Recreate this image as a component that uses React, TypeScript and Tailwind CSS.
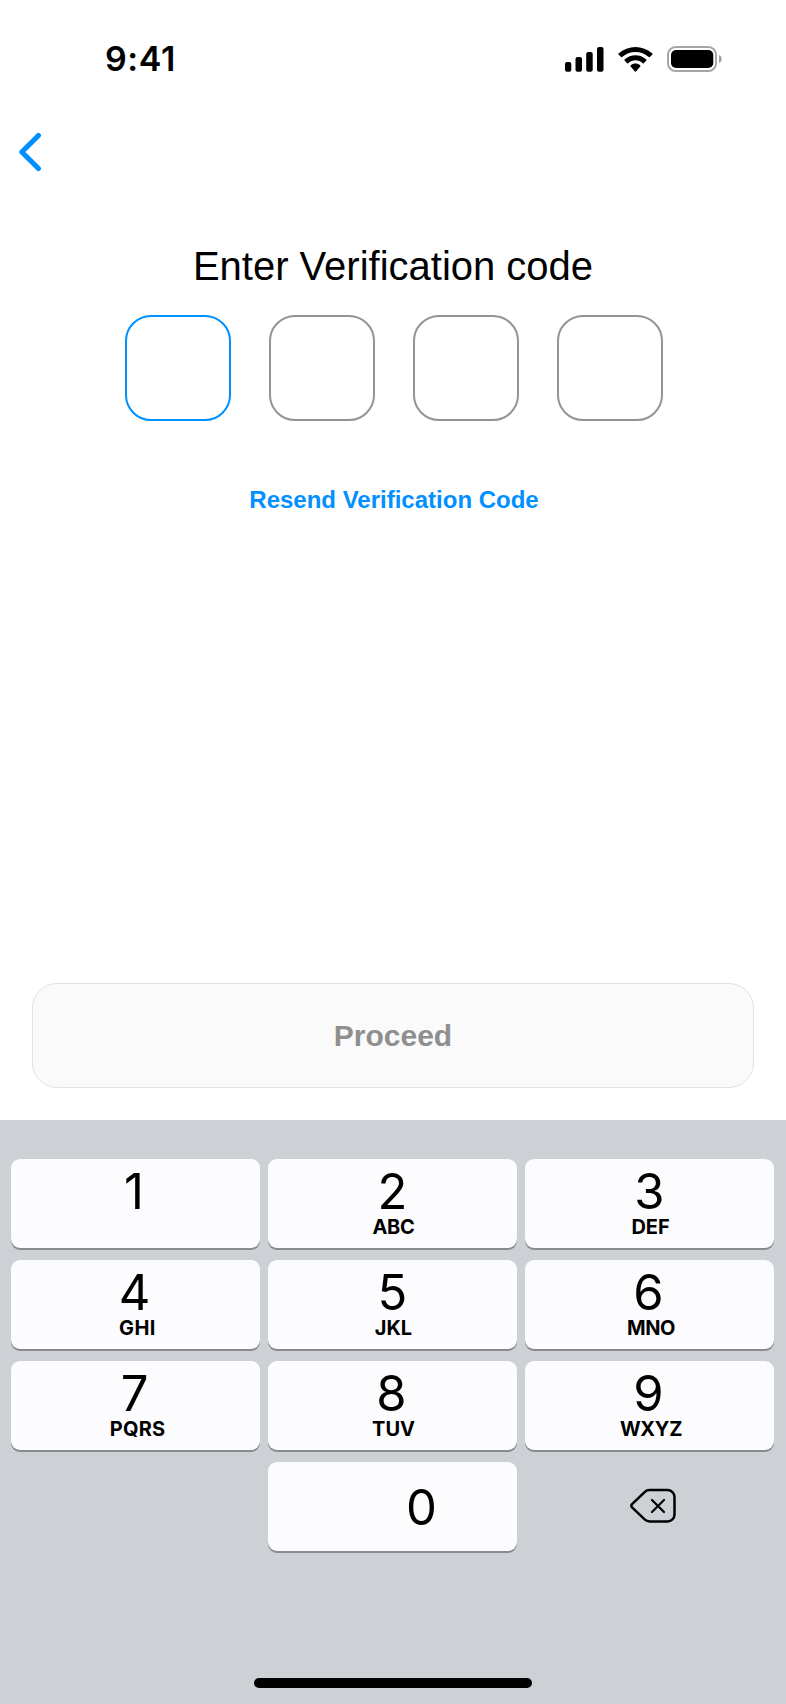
import React from "react";

type Key = { digit: string; letters: string; digitClass: string; lettersClass: string };

const keys: Key[] = [
  { digit: "1", letters: "", digitClass: "pr-[3px]", lettersClass: "" },
  { digit: "2", letters: "ABC", digitClass: "", lettersClass: "pl-[2px] tracking-[-0.3px]" },
  { digit: "3", letters: "DEF", digitClass: "", lettersClass: "pl-[2px] tracking-[-0.1px]" },
  { digit: "4", letters: "GHI", digitClass: "pr-[2px]", lettersClass: "pl-[4px] tracking-[0.4px]" },
  { digit: "5", letters: "JKL", digitClass: "", lettersClass: "pl-[2px]" },
  { digit: "6", letters: "MNO", digitClass: "pr-[2px]", lettersClass: "pl-[3px] tracking-[-0.4px]" },
  { digit: "7", letters: "PQRS", digitClass: "pr-[2px]", lettersClass: "pl-[4px] tracking-[0.2px]" },
  { digit: "8", letters: "TUV", digitClass: "pr-[2px]", lettersClass: "pl-[2px]" },
  { digit: "9", letters: "WXYZ", digitClass: "pr-[2px]", lettersClass: "pl-[3px] tracking-[-0.3px]" },
];

const keyBase =
  "h-[89px] rounded-[9px] bg-[#fcfcfe] text-black shadow-[0_2px_0_0_#898a8d] flex flex-col items-center";

function StatusBar() {
  return (
    <header className="flex h-[118px] items-start justify-between pl-[105px] pr-[64px] pt-[38px]">
      <div className="font-['Inter',sans-serif] text-[34px] font-semibold leading-[42px] tracking-[0.6px]">9:41</div>
      <svg width="158" height="42" viewBox="0 0 158 42" className="block">
        <g>
          <rect x="1" y="24" width="6.3" height="9.7" rx="2" />
          <rect x="11.5" y="19" width="6.5" height="14.7" rx="2" />
          <rect x="22.2" y="14" width="6.5" height="19.7" rx="2" />
          <rect x="33" y="9" width="6.5" height="24.7" rx="2" />
        </g>
        <path
          transform="translate(54.3 9) scale(2)"
          d="M8.5713 2.46628C11.0584 2.46639 13.4504 3.38847 15.2529 5.04195C15.3887 5.1696 15.6056 5.16799 15.7393 5.03834L17.0368 3.77487C17.1045 3.70911 17.1422 3.62004 17.1417 3.52735C17.1411 3.43467 17.1023 3.34603 17.0338 3.28104C12.3028 -1.09368 4.83907 -1.09368 0.108056 3.28104C0.0395 3.34598 0.0006 3.4346 0 3.52728C-0.0006 3.61996 0.037 3.70906 0.104689 3.77487L1.40255 5.03834C1.53615 5.16819 1.75327 5.1698 1.88893 5.04195C3.69167 3.38836 6.08395 2.46628 8.5713 2.46628ZM8.56795 6.68656C9.92527 6.68647 11.2341 7.19821 12.2403 8.12234C12.3763 8.25347 12.5907 8.25063 12.7234 8.11594L14.0106 6.79582C14.0784 6.72652 14.116 6.63251 14.115 6.5348C14.114 6.4371 14.0746 6.34384 14.0054 6.276C10.9416 3.3851 6.19688 3.3851 3.13305 6.276C3.06384 6.34384 3.02435 6.43715 3.02345 6.53487C3.02254 6.6326 3.0603 6.72658 3.12822 6.79582L4.41513 8.11594C4.54778 8.25063 4.76215 8.25347 4.89823 8.12234C5.90368 7.19882 7.21152 6.68713 8.56795 6.68656ZM11.0924 9.48011C11.0943 9.58546 11.0572 9.68703 10.9899 9.76084L8.81327 12.2156C8.74946 12.2877 8.66247 12.3283 8.5717 12.3283C8.48093 12.3283 8.39394 12.2877 8.33013 12.2156L6.15314 9.76084C6.08585 9.68697 6.04886 9.58537 6.05088 9.48002C6.0529 9.37468 6.09378 9.2749 6.16388 9.2043C7.55379 7.92057 9.58961 7.92057 10.9795 9.2043C11.0496 9.27496 11.0904 9.37477 11.0924 9.48011Z"
        />
        <rect x="104" y="9" width="48" height="24" rx="7.6" fill="none" stroke="#a6a6a6" strokeWidth="2" />
        <rect x="107" y="12" width="42.3" height="18" rx="5" />
        <path d="M155 17v8c1.7-.7 2.7-2.2 2.7-4s-1-3.3-2.7-4z" fill="#a0a0a0" />
      </svg>
    </header>
  );
}

export default function App() {
  return (
    <div className="flex h-[1704px] w-[786px] flex-col overflow-hidden bg-white font-['Liberation_Sans',Arial,sans-serif] text-black">
      <StatusBar />
      <nav className="h-[68px] pl-[14px] pt-[10px]">
        <button aria-label="Back" className="block">
          <svg width="32" height="48" viewBox="0 0 32 48" fill="none" stroke="#0090ff" strokeWidth="5.2" strokeLinecap="round" strokeLinejoin="round">
            <path d="M24.5 7.5L7.8 24l16.7 16.5" />
          </svg>
        </button>
      </nav>
      <main className="flex flex-1 flex-col items-center pt-[57px]">
        <h1 className="text-[40px] leading-[46px]">Enter Verification code</h1>
        <div className="ml-[2px] mt-[26px] flex gap-[38px]">
          <div className="size-[106px] rounded-[26px] border-2 border-[#0090ff]" />
          <div className="size-[106px] rounded-[26px] border-2 border-[#949494]" />
          <div className="size-[106px] rounded-[26px] border-2 border-[#949494]" />
          <div className="size-[106px] rounded-[26px] border-2 border-[#949494]" />
        </div>
        <button className="ml-[2px] mt-[65px] text-[24px] font-bold leading-[28px] text-[#0090ff]">Resend Verification Code</button>
        <button className="mb-[32px] mt-auto h-[105px] w-[722px] rounded-[25px] border border-[#e2e2e2] bg-[#fafafa] text-[30px] font-bold text-[#8f8f8f]">
          Proceed
        </button>
      </main>
      <section className="flex h-[584px] flex-col items-center bg-[#cdd0d4] pt-[39px] font-['Inter',sans-serif]">
        <div className="mr-[1px] grid grid-cols-[249px_249px_249px] gap-x-[8px] gap-y-[12px]">
          {keys.map((key) => (
            <button key={key.digit} className={keyBase}>
              <span className={`mt-[11px] text-[49px] leading-[44px] ${key.digitClass}`}>{key.digit}</span>
              {key.letters && (
                <span className={`mt-[1px] text-[20px] font-bold leading-[24px] ${key.lettersClass}`}>{key.letters}</span>
              )}
            </button>
          ))}
          <span />
          <button className={keyBase}>
            <span className="mt-[24px] pl-[58px] text-[49px] leading-[44px]">0</span>
          </button>
          <button aria-label="Delete" className="flex h-[89px] items-center justify-center pb-[2px] pl-[9px]">
            <svg width="50" height="40" viewBox="0 0 50 40" fill="none" stroke="black" strokeWidth="2.5" strokeLinecap="round" strokeLinejoin="round">
              <path d="M20.5 4h18a7 7 0 0 1 7 7v17.5a7 7 0 0 1-7 7h-18c-2 0-3.3-.6-4.6-1.8L3.3 21.6c-1.2-1.2-1.2-2.5 0-3.7L15.9 5.8C17.2 4.5 18.5 4 20.5 4z" />
              <path strokeWidth="2.2" d="M23 14l12 12m0-12l-12 12" />
            </svg>
          </button>
        </div>
        <div className="mb-[16px] mt-auto h-[10px] w-[278px] rounded-full bg-black" />
      </section>
    </div>
  );
}
